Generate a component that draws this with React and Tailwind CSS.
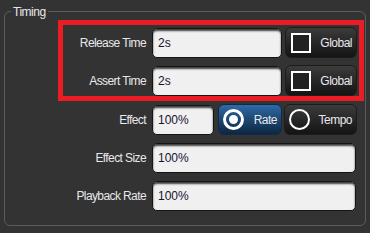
import React from 'react';

const font = { fontFamily: '"Liberation Sans", Arial, sans-serif' };

const Label = ({ children }) => (
  <div className="w-[141px] shrink-0 pr-[0px] text-right text-[12px] tracking-[-0.6px] text-[#e8e8ec]">
    {children}
  </div>
);

const Field = ({ value, className = '' }) => (
  <div
    className={`ml-[6px] flex h-[30px] items-center rounded-[5px] border border-[#141414] bg-[#f0f0f0] pl-[5px] text-[12px] text-[#1a1030] shadow-[inset_0_2px_2px_rgba(0,0,0,0.75)] ${className}`}
  >
    {value}
  </div>
);

const CheckButton = ({ label }) => (
  <div className="ml-[3px] flex h-[31px] w-[72px] items-center justify-between rounded-[6px] border border-[#1c1c1c] bg-gradient-to-b from-[#3c3c3c] to-[#141414] pl-[5px] pr-[4px]">
    <div className="h-[20px] w-[20px] border-2 border-white bg-[#222]" />
    <span className="text-[12px] tracking-[-0.5px] text-[#e8e8ec]">{label}</span>
  </div>
);

const RadioButton = ({ label, active, className = '' }) => (
  <div
    className={`flex h-[31px] items-center justify-between rounded-[6px] border pl-[4px] pr-[4px] ${
      active
        ? 'border-[#0f2a44] bg-gradient-to-b from-[#2f6aa6] to-[#0d2742]'
        : 'border-[#1c1c1c] bg-gradient-to-b from-[#3c3c3c] to-[#141414]'
    } ${className}`}
  >
    <div
      className={`flex h-[21px] w-[21px] items-center justify-center rounded-full border-white ${
        active ? 'border-[3px]' : 'border-2'
      }`}
    >
      {active && <div className="h-[9px] w-[9px] rounded-full bg-white" />}
    </div>
    <span className="text-[12px] tracking-[-0.5px] text-[#e8e8ec]">{label}</span>
  </div>
);

export default function App() {
  return (
    <div className="relative h-[233px] w-[370px] overflow-hidden bg-[#333333] pt-[11px] pl-[4px]" style={font}>
      <div className="relative h-[215px] w-[362px] rounded-[6px] border border-[#5c5c5c] pt-[15px]">
        <div className="absolute left-[6px] top-[-9px] bg-[#333333] px-[2px] text-[12px] tracking-[-0.5px] text-[#e8e8ec]">
          Timing
        </div>

        <div className="flex flex-col gap-[7px]">
          <div className="flex h-[31px] items-center">
            <Label>Release Time</Label>
            <Field value="2s" className="w-[130px]" />
            <CheckButton label="Global" />
          </div>
          <div className="flex h-[31px] items-center">
            <Label>Assert Time</Label>
            <Field value="2s" className="w-[130px]" />
            <CheckButton label="Global" />
          </div>
          <div className="mt-[1px] flex h-[31px] items-center">
            <Label>Effect</Label>
            <Field value="100%" className="w-[62px]" />
            <RadioButton label="Rate" active className="ml-[4px] w-[64px]" />
            <RadioButton label="Tempo" className="ml-[2px] w-[73px]" />
          </div>
          <div className="flex h-[31px] items-center">
            <Label>Effect Size</Label>
            <Field value="100%" className="w-[204px]" />
          </div>
          <div className="flex h-[31px] items-center">
            <Label>Playback Rate</Label>
            <Field value="100%" className="w-[204px]" />
          </div>
        </div>
      </div>

      <div className="absolute left-[58px] top-[20px] h-[81px] w-[306px] border-[5px] border-[#ec1c24]" />
    </div>
  );
}
